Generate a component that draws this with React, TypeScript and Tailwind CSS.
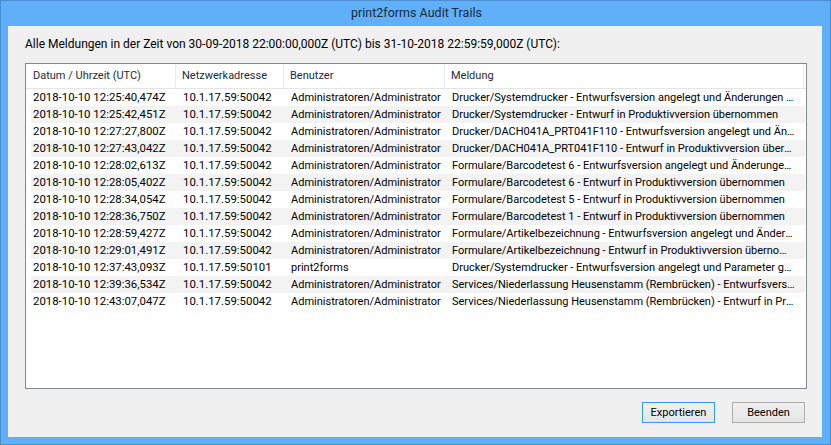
const rows = [
    ['2018-10-10 12:25:40,474Z', '10.1.17.59:50042', 'Administratoren/Administrator', 'Drucker/Systemdrucker - Entwurfsversion angelegt und Änderungen übernommen'],
    ['2018-10-10 12:25:42,451Z', '10.1.17.59:50042', 'Administratoren/Administrator', 'Drucker/Systemdrucker - Entwurf in Produktivversion übernommen'],
    ['2018-10-10 12:27:27,800Z', '10.1.17.59:50042', 'Administratoren/Administrator', 'Drucker/DACH041A_PRT041F110 - Entwurfsversion angelegt und Änderungen übernommen'],
    ['2018-10-10 12:27:43,042Z', '10.1.17.59:50042', 'Administratoren/Administrator', 'Drucker/DACH041A_PRT041F110 - Entwurf in Produktivversion übernommen'],
    ['2018-10-10 12:28:02,613Z', '10.1.17.59:50042', 'Administratoren/Administrator', 'Formulare/Barcodetest 6 - Entwurfsversion angelegt und Änderungen übernommen'],
    ['2018-10-10 12:28:05,402Z', '10.1.17.59:50042', 'Administratoren/Administrator', 'Formulare/Barcodetest 6 - Entwurf in Produktivversion übernommen'],
    ['2018-10-10 12:28:34,054Z', '10.1.17.59:50042', 'Administratoren/Administrator', 'Formulare/Barcodetest 5 - Entwurf in Produktivversion übernommen'],
    ['2018-10-10 12:28:36,750Z', '10.1.17.59:50042', 'Administratoren/Administrator', 'Formulare/Barcodetest 1 - Entwurf in Produktivversion übernommen'],
    ['2018-10-10 12:28:59,427Z', '10.1.17.59:50042', 'Administratoren/Administrator', 'Formulare/Artikelbezeichnung - Entwurfsversion angelegt und Änderungen übernommen'],
    ['2018-10-10 12:29:01,491Z', '10.1.17.59:50042', 'Administratoren/Administrator', 'Formulare/Artikelbezeichnung - Entwurf in Produktivversion übernommen'],
    ['2018-10-10 12:37:43,093Z', '10.1.17.59:50101', 'print2forms', 'Drucker/Systemdrucker - Entwurfsversion angelegt und Parameter geändert'],
    ['2018-10-10 12:39:36,534Z', '10.1.17.59:50042', 'Administratoren/Administrator', 'Services/Niederlassung Heusenstamm (Rembrücken) - Entwurfsversion angelegt'],
    ['2018-10-10 12:43:07,047Z', '10.1.17.59:50042', 'Administratoren/Administrator', 'Services/Niederlassung Heusenstamm (Rembrücken) - Entwurf in Produktivversion übernommen'],
]

export default function App() {
    return (
        <div className="w-[831px] h-[445px] bg-[#5fb0f8] border border-[#4a8cd0] flex flex-col text-[11px] text-black font-['Roboto',sans-serif] overflow-hidden">
            {/* Title bar */}
            <div className="h-[25px] shrink-0 flex items-center justify-center text-[12.5px] text-[#1c2a3a] pl-[2px]">
                print2forms Audit Trails
            </div>

            {/* Client area */}
            <div className="flex-1 ml-[7px] mr-[8px] mb-[7px] bg-[#f0f0f0] flex flex-col px-[17px]">
                <div className="h-[37px] pt-[10px] leading-[17px] text-[12px]">
                    Alle Meldungen in der Zeit von 30-09-2018 22:00:00,000Z (UTC) bis 31-10-2018 22:59:59,000Z (UTC):
                </div>

                {/* List view */}
                <div className="w-[782px] h-[326px] border border-[#828790] bg-white flex flex-col">
                    <div className="h-[25px] shrink-0 flex border-b border-[#e5e5e5] text-[#1e2a3a]">
                        <div className="w-[150px] border-r border-[#e3ebf5] pl-[7px] flex items-center">Datum / Uhrzeit (UTC)</div>
                        <div className="w-[108px] border-r border-[#e3ebf5] pl-[6px] flex items-center">Netzwerkadresse</div>
                        <div className="w-[161px] border-r border-[#e3ebf5] pl-[6px] flex items-center">Benutzer</div>
                        <div className="w-[359px] border-r border-[#e3ebf5] pl-[6px] flex items-center">Meldung</div>
                    </div>
                    <div className="flex flex-col">
                        {rows.map((r, i) => (
                            <div
                                key={i}
                                className={`h-[17px] ml-[5px] w-[774px] flex items-center leading-[17px] ${i % 2 === 1 ? 'bg-[#f3f3f3]' : 'bg-white'}`}
                            >
                                <div className="w-[145px] pl-[2px] whitespace-nowrap text-[11.4px]">{r[0]}</div>
                                <div className="w-[108px] pl-[7px] whitespace-nowrap text-[11.4px]">{r[1]}</div>
                                <div className="w-[161px] pl-[7px] truncate">{r[2]}</div>
                                <div className="w-[352px] pl-[7px] pr-[1px] truncate">{r[3]}</div>
                            </div>
                        ))}
                    </div>
                </div>

                {/* Buttons */}
                <div className="flex justify-end gap-[17px] mt-[13px]">
                    <button className="w-[73px] h-[21px] border border-[#3399ff] bg-gradient-to-b from-[#f0f0f0] to-[#e5e5e5] leading-none">
                        Exportieren
                    </button>
                    <button className="w-[73px] h-[21px] border border-[#adadad] bg-gradient-to-b from-[#f0f0f0] to-[#e5e5e5] leading-none">
                        Beenden
                    </button>
                </div>
            </div>
        </div>
    )
}
